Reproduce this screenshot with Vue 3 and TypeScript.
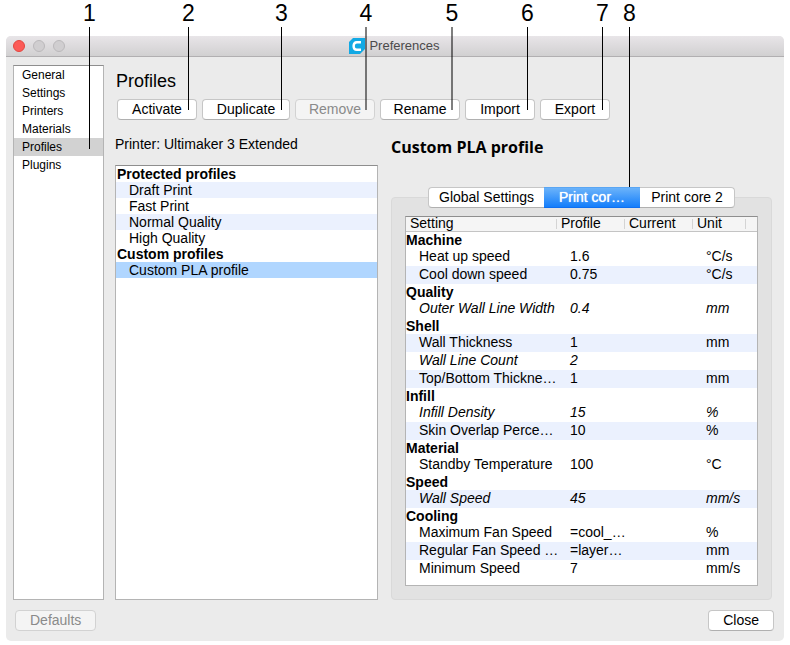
<script setup lang="ts">
import { ref } from 'vue'

interface Callout { n: number; x: number; length: number; tone: 'solid' | 'soft' }
interface Item { name: string; profile: string; unit: string; custom?: boolean; striped?: boolean }
interface Group { name: string; items: Item[] }

const callouts: Callout[] = [
  { n: 1, x: 89, length: 122, tone: 'solid' },
  { n: 2, x: 188, length: 83, tone: 'solid' },
  { n: 3, x: 281, length: 83, tone: 'solid' },
  { n: 4, x: 366, length: 83, tone: 'soft' },
  { n: 5, x: 452, length: 83, tone: 'soft' },
  { n: 6, x: 527, length: 83, tone: 'solid' },
  { n: 7, x: 602, length: 83, tone: 'solid' },
  { n: 8, x: 629, length: 169, tone: 'solid' },
]

const pages = ['General', 'Settings', 'Printers', 'Materials', 'Profiles', 'Plugins']
const page = ref('Profiles')

const actions = [
  { label: 'Activate', disabled: false },
  { label: 'Duplicate', disabled: false },
  { label: 'Remove', disabled: true },
  { label: 'Rename', disabled: false },
  { label: 'Import', disabled: false },
  { label: 'Export', disabled: false },
]

const profileGroups = [
  { name: 'Protected profiles', items: ['Draft Print', 'Fast Print', 'Normal Quality', 'High Quality'] },
  { name: 'Custom profiles', items: ['Custom PLA profile'] },
]
const profile = ref('Custom PLA profile')

const tabs = ['Global Settings', 'Print cor…', 'Print core 2']
const tab = ref('Print cor…')

const groups: Group[] = [
  { name: 'Machine', items: [
    { name: 'Heat up speed', profile: '1.6', unit: '°C/s' },
    { name: 'Cool down speed', profile: '0.75', unit: '°C/s' },
  ] },
  { name: 'Quality', items: [
    { name: 'Outer Wall Line Width', profile: '0.4', unit: 'mm', custom: true },
  ] },
  { name: 'Shell', items: [
    { name: 'Wall Thickness', profile: '1', unit: 'mm' },
    { name: 'Wall Line Count', profile: '2', unit: '', custom: true },
    { name: 'Top/Bottom Thickne…', profile: '1', unit: 'mm' },
  ] },
  { name: 'Infill', items: [
    { name: 'Infill Density', profile: '15', unit: '%', custom: true },
    { name: 'Skin Overlap Perce…', profile: '10', unit: '%' },
  ] },
  { name: 'Material', items: [
    { name: 'Standby Temperature', profile: '100', unit: '°C' },
  ] },
  { name: 'Speed', items: [
    { name: 'Wall Speed', profile: '45', unit: 'mm/s', custom: true },
  ] },
  { name: 'Cooling', items: [
    { name: 'Maximum Fan Speed', profile: '=cool_…', unit: '%' },
    { name: 'Regular Fan Speed …', profile: '=layer…', unit: 'mm' },
    { name: 'Minimum Speed', profile: '7', unit: 'mm/s' },
  ] },
]

// Stripes alternate over the settings only; group headings do not count.
groups.flatMap((g) => g.items).forEach((item, i) => { item.striped = i % 2 === 1 })
</script>

<template>
  <div class="page">
    <section class="window">
      <header class="titlebar">
        <div class="lights">
          <button type="button" class="light close" aria-label="Close window"></button>
          <button type="button" class="light" aria-label="Minimize" disabled></button>
          <button type="button" class="light" aria-label="Zoom" disabled></button>
        </div>
        <div class="title">
          <svg width="16" height="16" viewBox="0 0 16 16" aria-hidden="true">
            <path d="M4 0H16V11L11 16H0V4Z" fill="#12a9e4" />
            <path d="M12 4.2H7.8Q4.6 4.2 4.6 8T7.8 11.8H12" fill="none" stroke="#fff" stroke-width="2.4" />
          </svg>
          <span>Preferences</span>
        </div>
      </header>

      <div class="body">
        <nav class="sidebar">
          <button v-for="p in pages" :key="p" type="button" :class="{ active: p === page }" @click="page = p">{{ p }}</button>
        </nav>

        <main class="main">
          <h1>Profiles</h1>
          <div class="actions">
            <button v-for="a in actions" :key="a.label" type="button" class="btn" :disabled="a.disabled">{{ a.label }}</button>
          </div>

          <div class="panels">
            <section class="panel">
              <p class="printer">Printer: Ultimaker 3 Extended</p>
              <div class="profiles">
                <div v-for="g in profileGroups" :key="g.name" class="profile-group">
                  <h3>{{ g.name }}</h3>
                  <button v-for="i in g.items" :key="i" type="button" :class="{ selected: i === profile }" @click="profile = i">{{ i }}</button>
                </div>
              </div>
            </section>

            <section class="panel">
              <h2>{{ profile }}</h2>
              <div class="tabs" role="tablist">
                <button v-for="t in tabs" :key="t" type="button" role="tab" :aria-selected="t === tab" :class="{ current: t === tab }" @click="tab = t">{{ t }}</button>
              </div>
              <div class="box">
                <div class="frame">
                  <table>
                    <colgroup>
                      <col /><col class="c-value" /><col class="c-value" /><col class="c-unit" /><col class="c-end" />
                    </colgroup>
                    <thead>
                      <tr><th>Setting</th><th>Profile</th><th>Current</th><th>Unit</th><th></th></tr>
                    </thead>
                    <tbody v-for="g in groups" :key="g.name">
                      <tr class="group"><th colspan="5">{{ g.name }}</th></tr>
                      <tr v-for="i in g.items" :key="i.name" :class="{ striped: i.striped, custom: i.custom }">
                        <td>{{ i.name }}</td><td>{{ i.profile }}</td><td></td><td>{{ i.unit }}</td><td></td>
                      </tr>
                    </tbody>
                  </table>
                </div>
              </div>
            </section>
          </div>
        </main>
      </div>

      <footer class="footer">
        <button type="button" class="btn" disabled>Defaults</button>
        <button type="button" class="btn">Close</button>
      </footer>
    </section>

    <div v-for="c in callouts" :key="c.n" class="callout" :class="c.tone" :style="{ left: c.x + 'px' }">
      <span>{{ c.n }}</span>
      <i :style="{ height: c.length + 'px' }"></i>
    </div>
  </div>
</template>

<style>
body { background: #fff; }
</style>

<style scoped>
.page {
  position: relative;
  box-sizing: border-box;
  min-height: 100vh;
  padding: 36px 6px 4px;
  display: flex;
  flex-direction: column;
  font-family: "Liberation Sans", Arial, sans-serif;
  font-size: 14px;
  line-height: 16px;
  color: #000;
}
h1, h2, h3, p { margin: 0; font-weight: 400; }
button { font: inherit; color: inherit; margin: 0; border: 0; background: none; padding: 0; text-align: left; }

.window {
  flex: 1;
  display: flex;
  flex-direction: column;
  background: #ebebeb;
  border-radius: 5px;
  overflow: hidden;
}
.titlebar {
  display: grid;
  grid-template-columns: 1fr auto 1fr;
  align-items: center;
  height: 20px;
  padding: 0 8px 0 7px;
  background: linear-gradient(#e8e5e8, #d1d0d1);
  border-bottom: 1px solid #b1afb1;
}
.lights { display: flex; gap: 8px; }
.light {
  box-sizing: border-box;
  width: 12px;
  height: 12px;
  border-radius: 50%;
  border: 1px solid #bab8ba;
  background: #d0ced0;
}
.light.close { background: #fc5b57; border-color: #e2463f; }
.title { display: flex; align-items: center; gap: 4px; font-size: 13px; color: #4b4a4b; }

.body {
  flex: 1;
  display: grid;
  grid-template-columns: 91px 1fr;
  gap: 11px;
  padding: 8px 12px 0 7px;
}
.sidebar {
  display: flex;
  flex-direction: column;
  background: #fff;
  border: 1px solid #b4b4b4;
  border-top-color: #8e8e8e;
  font-size: 12px;
  line-height: 18px;
}
.sidebar button { padding-left: 8px; }
.sidebar .active { background: #d2d2d2; }

.main { display: flex; flex-direction: column; }
h1 { font-size: 18px; line-height: 32px; padding: 0 1px 2px; }
.actions {
  display: grid;
  grid-template-columns: 80px 88px 80px 80px 70px 70px;
  gap: 5px;
  padding-left: 2px;
}
.btn {
  box-sizing: border-box;
  height: 21px;
  border: 1px solid #c6c6c6;
  border-bottom-color: #b0b0b0;
  border-radius: 4px;
  background: #fff;
  text-align: center;
  line-height: 19px;
}
.btn:disabled { background: #f4f4f4; border-color: #d2d2d2; color: #8a8a8a; }

.panels { flex: 1; display: grid; grid-template-columns: 263fr 381fr; gap: 13px; }
.panel { display: flex; flex-direction: column; min-width: 0; }
.printer { padding: 14px 0 11px; line-height: 20px; }
.profiles { flex: 1; background: #fff; border: 1px solid #b4b4b4; border-top-color: #8e8e8e; }
.profile-group { display: flex; flex-direction: column; }
.profile-group h3 { font-size: 14px; font-weight: 700; padding-left: 1px; }
.profile-group button { padding-left: 13px; }
.profile-group button:nth-child(even) { background: #ebf1fe; }
.profile-group .selected:nth-child(n) { background: #b0d6ff; }

h2 {
  padding: 15px 0 28px;
  font-family: "Open Sans", "Noto Sans", sans-serif;
  font-size: 16px;
  line-height: 24px;
  font-weight: 700;
}
.tabs {
  z-index: 1;
  align-self: center;
  display: grid;
  grid-template-columns: 116px 96px 95px;
  margin-bottom: -11px;
}
.tabs button {
  box-sizing: border-box;
  height: 21px;
  background: #fff;
  border: 1px solid #c6c6c6;
  border-bottom-color: #b0b0b0;
  text-align: center;
  line-height: 19px;
}
.tabs button:first-child { border-right: 0; border-radius: 4px 0 0 4px; }
.tabs button:last-child { border-left: 0; border-radius: 0 4px 4px 0; }
.tabs .current {
  background: linear-gradient(#6bb3fa, #147efb);
  border-width: 1px 0;
  border-color: #5aa6f3 transparent #0f6ff0;
  color: #fff;
  text-shadow: 0 0 1px #fff;
}
.box {
  flex: 1;
  display: flex;
  background: #e2e2e2;
  border: 1px solid #d9d9d9;
  border-radius: 4px;
  padding: 18px 13px 13px;
}
.frame {
  flex: 1;
  min-width: 0;
  background: #fff;
  border: 1px solid #b4b4b4;
  border-top-color: #8e8e8e;
  padding-bottom: 7px;
}
table { width: 100%; table-layout: fixed; border-collapse: separate; border-spacing: 0; }
.c-value { width: 68px; }
.c-unit { width: 53px; }
.c-end { width: 11px; }
th, td { padding: 0; text-align: left; vertical-align: top; font-weight: 400; white-space: nowrap; }
thead th {
  height: 14px;
  line-height: 12px;
  padding-left: 4px;
  background: linear-gradient(#d4d4d4, #d4d4d4) no-repeat right center / 1px 10px, #f5f5f5;
  border-bottom: 1px solid #c4c4c4;
}
thead th:last-child { padding: 0; background: #f5f5f5; }
.group th { height: 16px; font-weight: 700; }
td { height: 18px; line-height: 16px; padding-left: 13px; }
td:last-child { padding: 0; }
.striped td { background: #ebf1fe; }
.custom td { font-style: italic; }

.footer { display: flex; justify-content: space-between; padding: 10px 10px 10px 9px; }
.footer .btn { padding: 0 14px; }

.callout {
  position: absolute;
  top: 1px;
  width: 1px;
  display: flex;
  flex-direction: column;
  align-items: center;
  pointer-events: none;
}
.callout span { font-size: 23px; line-height: 24px; padding-bottom: 2px; }
.callout i { width: 1px; background: #000; }
.callout.soft { width: 2px; margin-left: -1px; }
.callout.soft i { width: 2px; background: rgba(0, 0, 0, 0.5); }
</style>
